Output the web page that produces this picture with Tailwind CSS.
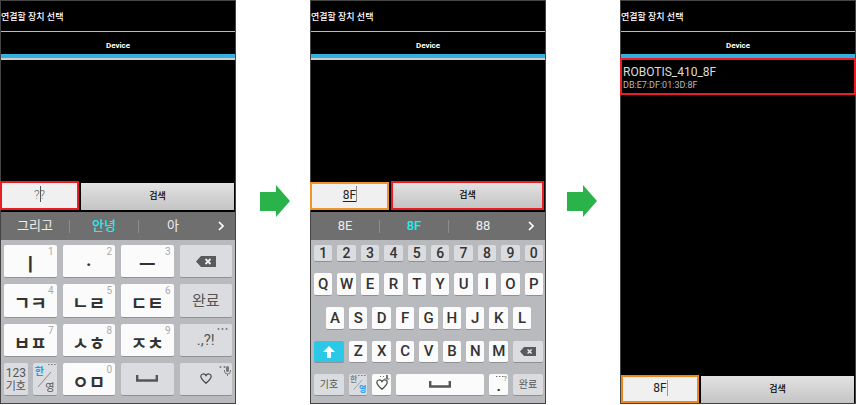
<!DOCTYPE html>
<html lang="ko">
<head>
<meta charset="utf-8">
<meta name="viewport" content="width=device-width, initial-scale=1">
<title>연결할 장치 선택</title>
<script src="https://cdn.jsdelivr.net/npm/@tailwindcss/browser@4"></script>
</head>
<body class="bg-white font-[Roboto,'Noto_Sans_CJK_KR',sans-serif]">
<main class="grid min-h-screen grid-cols-[236fr_74fr_236fr_74fr_236fr] pb-px">

  <!-- Step 1: Korean keypad -->
  <section class="flex flex-col border border-[#444] bg-black">
    <h1 class="h-[30px] pt-[9px] text-[9px] leading-[14px] font-medium text-white">연결할 장치 선택</h1>
    <h2 class="h-[23px] border-t border-[#bbb] pt-[7px] text-center text-[8px] leading-[14px] font-bold text-white">Device</h2>
    <div class="h-[6px] border-b-2 border-[#ccc] bg-[#33b0e0]"></div>
    <div class="flex-1"></div>
    <form class="flex h-[31px] gap-[2px] pr-px pb-[2px]">
      <div class="relative -ml-px w-[79px]">
        <input aria-label="장치 이름" value="??" class="h-full w-full border-2 border-[#ec1c24] bg-[#f0f0f0] pb-[2px] text-center text-[12px] font-light text-[#666] outline-none">
        <span class="absolute top-[5px] left-1/2 h-4 w-px bg-[#555]"></span>
      </div>
      <button type="button" class="mt-[2px] flex-1 bg-linear-to-b from-[#e2e2e2] to-[#c4c4c4] text-[9px] leading-none font-medium text-black">검색</button>
    </form>
    <div class="flex h-7 items-center bg-[#6f6f6f] text-[13px] text-[#eee]">
      <button type="button" class="flex-1">그리고</button>
      <span class="h-[13px] w-px bg-[#8c8c8c]"></span>
      <button type="button" class="flex-1 font-medium text-[#22eeee]">안녕</button>
      <span class="h-[13px] w-px bg-[#8c8c8c]"></span>
      <button type="button" class="flex-1">아</button>
      <button type="button" aria-label="더 보기" class="flex w-7 justify-center"><svg class="h-[10px] w-[6px]" viewBox="0 0 6 10"><path d="M1 1l4 4-4 4" fill="none" stroke="#fff" stroke-width="1.7"/></svg></button>
    </div>
    <div id="keypad" class="grid h-[163px] grid-cols-4 grid-rows-4 gap-[6px] bg-[#b9babe] px-[3px] pt-[5px] pb-[7px]"></div>
  </section>

  <div class="flex items-center justify-center pb-[2px] pl-[3px]">
    <svg class="h-8 w-[30px]" viewBox="0 0 30 32"><path d="M0 7h16V0l14 16-14 16v-6H0z" fill="#2bb34b"/></svg>
  </div>

  <!-- Step 2: QWERTY keyboard -->
  <section class="flex flex-col border border-[#444] bg-black">
    <h1 class="h-[30px] pt-[9px] text-[9px] leading-[14px] font-medium text-white">연결할 장치 선택</h1>
    <h2 class="h-[23px] border-t border-[#bbb] pt-[7px] text-center text-[8px] leading-[14px] font-bold text-white">Device</h2>
    <div class="h-[6px] border-b-2 border-[#ccc] bg-[#33b0e0]"></div>
    <div class="flex-1"></div>
    <form class="flex h-[31px] gap-[2px] pr-px pb-[2px]">
      <div class="relative -ml-px w-[79px] pt-px">
        <input aria-label="장치 이름" value="8F" class="h-full w-full border-2 border-[#f0932b] bg-[#f0f0f0] pb-[2px] text-center text-[12px] text-[#222] underline underline-offset-2 outline-none">
        <span class="absolute top-[5px] left-[46px] h-4 w-px bg-[#888]"></span>
      </div>
      <button type="button" class="flex-1 border-2 border-[#ec1c24] bg-linear-to-b from-[#e2e2e2] to-[#c4c4c4] text-[9px] leading-none font-medium text-black">검색</button>
    </form>
    <div class="flex h-7 items-center bg-[#6f6f6f] text-[13px] text-[#eee]">
      <button type="button" class="flex-1">8E</button>
      <span class="h-[13px] w-px bg-[#8c8c8c]"></span>
      <button type="button" class="flex-1 font-medium text-[#22eeee]">8F</button>
      <span class="h-[13px] w-px bg-[#8c8c8c]"></span>
      <button type="button" class="flex-1">88</button>
      <button type="button" aria-label="더 보기" class="flex w-7 justify-center"><svg class="h-[10px] w-[6px]" viewBox="0 0 6 10"><path d="M1 1l4 4-4 4" fill="none" stroke="#fff" stroke-width="1.7"/></svg></button>
    </div>
    <div id="qwerty" class="flex h-[163px] flex-col justify-between bg-[#b9babe] pt-[5px] pr-[2px] pb-[7px] pl-[3px]"></div>
  </section>

  <div class="flex items-center justify-center pr-[3px] pb-[2px]">
    <svg class="h-8 w-[30px]" viewBox="0 0 30 32"><path d="M0 7h16V0l14 16-14 16v-6H0z" fill="#2bb34b"/></svg>
  </div>

  <!-- Step 3: search result -->
  <section class="flex flex-col border border-[#444] bg-black">
    <h1 class="h-[30px] pt-[9px] text-[9px] leading-[14px] font-medium text-white">연결할 장치 선택</h1>
    <h2 class="h-[23px] border-t border-[#bbb] pt-[7px] text-center text-[8px] leading-[14px] font-bold text-white">Device</h2>
    <div class="h-1 bg-[#33b0e0]"></div>
    <a href="#" class="-mx-px block h-[37px] border-2 border-[#ec1c24] pt-[4px] pl-px text-[#ddd]">
      <span class="block text-[12px] leading-4">ROBOTIS_410_8F</span>
      <span class="block text-[9px] leading-[11px] text-[#bbb]">DB:E7:DF:01:3D:8F</span>
    </a>
    <div class="flex-1"></div>
    <form class="flex h-7 gap-[2px] pr-px">
      <div class="relative w-[78px]">
        <input aria-label="장치 이름" value="8F" class="h-full w-full border-2 border-[#f08519] bg-[#f0f0f0] pb-[2px] text-center text-[12px] text-[#222] outline-none">
        <span class="absolute top-[5px] left-[46px] h-4 w-px bg-[#999]"></span>
      </div>
      <button type="button" class="mt-px flex-1 bg-linear-to-b from-[#e2e2e2] to-[#c4c4c4] text-[9px] leading-none font-medium text-black">검색</button>
    </form>
  </section>
</main>

<script>
const light = 'bg-[#fbfbfb] text-[#333]', grey = 'bg-[#dbdce0] text-[#555]';
const base = 'relative flex items-center justify-center rounded-[2px] border-b border-[#8f9094] leading-none ';
const key = (label, body, cls) => `<button type="button" aria-label="${label}" class="${base}${cls}">${body}</button>`;
const del = size => `<svg class="${size}" viewBox="0 0 20 11"><path d="M5 0h15v11H5L0 5.500z" fill="#5a5a5a"/><path d="M9.500 3l5 5m0-5l-5 5" stroke="#eee" stroke-width="1.800"/></svg>`;
const space = '<svg class="h-[7px] w-[22px]" viewBox="0 0 22 7"><path d="M1.200 0v5.500h19.600V0" fill="none" stroke="#555" stroke-width="2.400"/></svg>';
const heart = '<svg class="h-[11px] w-[12px]" viewBox="0 0 12 11"><path d="M6 10.200C3 7.500.8 5.500.8 3.500.8.700 4.500 0 6 2.600 7.500 0 11.200.700 11.200 3.500c0 2-2.200 4-5.200 6.700z" fill="none" stroke="#444" stroke-width="1.200"/></svg>';
const dots = n => `<svg class="h-[2px] w-[12px]" viewBox="0 0 12 2">${[0, 4, 8].slice(0, n).map(x => `<circle cx="${x + 1.5}" cy="1" r="1" fill="#777"/>`).join('')}</svg>`;
const miniDots = '<svg class="h-[2px] w-[8px]" viewBox="0 0 8 2"><path d="M0 .5h1.500M3 .5h1.500M6 .5h1.500" stroke="#777"/></svg>';
const mic = '<svg class="h-[10px] w-[7px]" viewBox="0 0 7 10"><rect x="2" width="3" height="6" rx="1.500" fill="#777"/><path d="M.5 4v1a3 3 0 0 0 6 0V4M3.500 8v2" fill="none" stroke="#777"/></svg>';
const slash = '<svg class="absolute inset-0 h-full w-full" viewBox="0 0 24 32"><path d="M5 24L18 9" stroke="#888"/></svg>';

const jamo = (t, n) => key(t, `<span class="pt-[8px] text-[18px] leading-none font-bold">${t}</span><span class="absolute top-[2px] right-[3px] text-[10px] leading-[10px] text-[#aaa]">${n}</span>`, light);
document.getElementById('keypad').innerHTML = [
  jamo('ㅣ', 1), jamo('·', 2), jamo('ㅡ', 3), key('지우기', del('h-[11px] w-5'), grey),
  jamo('ㄱㅋ', 4), jamo('ㄴㄹ', 5), jamo('ㄷㅌ', 6), key('완료', '<span class="pt-[2px]">완료</span>', grey + ' text-[15px]'),
  jamo('ㅂㅍ', 7), jamo('ㅅㅎ', 8), jamo('ㅈㅊ', 9),
  key('문장 부호', `<span class="pt-[2px] text-[15px]">.,?!</span><span class="absolute top-[4px] right-[3px] flex">${dots(3)}</span>`, grey),
  '<div class="grid grid-cols-2 gap-[5px]">' +
  key('숫자와 기호', '<span class="pt-[2px] text-[12px] leading-[13px]">123<br><span class="text-[11px]">기호</span></span>', grey) +
  key('한영 전환', `${slash}<span class="absolute top-[4px] left-[2px] text-[10px] leading-[9px] font-bold text-[#1c9cf0]">한</span><span class="absolute right-[2px] bottom-[3px] text-[10px] leading-[9px]">영</span><span class="absolute top-px right-px flex">${miniDots}</span>`, grey) + '</div>',
  jamo('ㅇㅁ', 0), key('스페이스', space, grey),
  key('하트', `${heart}<span class="absolute top-[3px] right-px flex items-start">${dots(2)}</span><span class="absolute top-[3px] right-px">${mic}</span>`, grey)
].join('');

const row = (h, keys) => `<div class="grid grid-cols-[repeat(20,minmax(0,1fr))] gap-x-[5px] ${h}">${keys}</div>`;
const letters = (s, cls) => [...s].map(c => key(c, c, 'col-span-2 ' + cls)).join('');
const letter = light + ' text-[15px] font-medium';
document.getElementById('qwerty').innerHTML =
  row('h-[17px]', letters('1234567890', 'bg-[#dbdce0] text-[#333] text-[14px] font-medium')) +
  row('h-[23px]', letters('QWERTYUIOP', letter)) +
  row('h-[23px]', '<span></span>' + letters('ASDFGHJKL', letter)) +
  row('h-[22px]',
    key('시프트', '<svg class="h-3 w-3" viewBox="0 0 12 12"><path d="M6 0l6 6H8v6H4V6H0z" fill="#fff"/></svg>', 'col-span-3 bg-[#2cc8e8]') +
    letters('ZXCVBNM', letter) +
    key('지우기', del('h-[9px] w-4'), 'col-span-3 ' + grey)) +
  row('h-[22px]',
    key('기호', '기호', 'col-span-3 text-[10px] ' + grey) +
    key('한영 전환', `${slash}<span class="absolute top-[2px] left-px text-[8px] leading-[8px]">한</span><span class="absolute right-px bottom-px text-[8px] leading-[8px] font-bold text-[#1c9cf0]">영</span><span class="absolute top-px right-px flex">${miniDots}</span>`, 'col-span-2 ' + grey) +
    key('하트', `${heart}<span class="absolute top-px right-px flex h-[7px]"><svg class="h-[7px] w-[11px]" viewBox="0 0 11 7"><path d="M1 1.500h1M4 1.500h1" stroke="#777"/><rect x="7" width="2" height="4" fill="#777"/><path d="M6 3v1q2 2 4 0V3M8 5v2" fill="none" stroke="#777" stroke-width=".8"/></svg></span>`, 'col-span-2 ' + light) +
    key('스페이스', space, 'col-span-8 ' + light) +
    key('마침표', `<span class="pt-[4px] text-[15px] font-bold">.</span><span class="absolute top-px right-px flex items-start text-[7px] leading-[8px] text-[#777]"><span class="flex pt-px">${miniDots}</span>?</span>`, 'col-span-2 ' + light) +
    key('완료', '완료', 'text-[10px] ' + 'col-span-3 ' + grey));
</script>
</body>
</html>
